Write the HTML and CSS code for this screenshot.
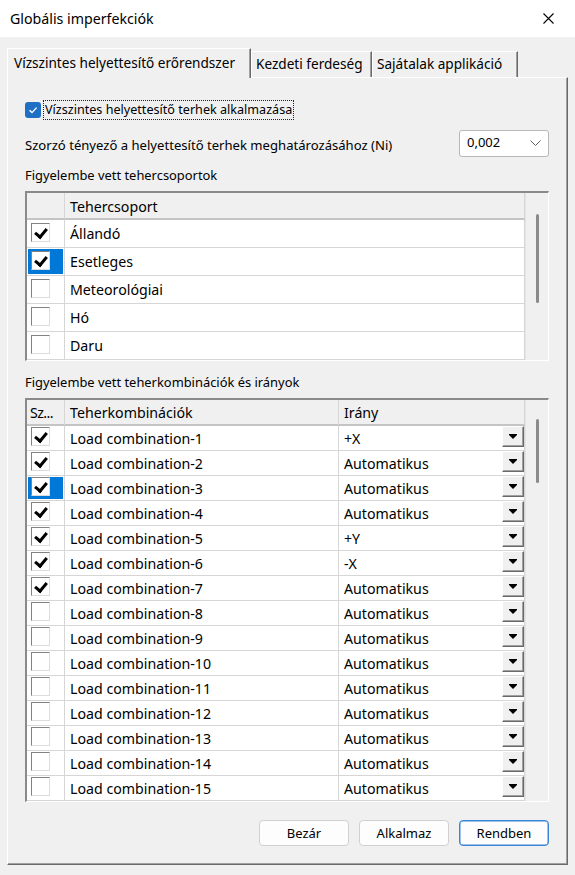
FILE: index.html
```html
<!DOCTYPE html>
<html lang="hu">
<head>
<meta charset="utf-8">
<title>Globális imperfekciók</title>
<link rel="stylesheet" href="styles.css">
</head>
<body>
<div class="window">
  <div class="titlebar">
    <span class="title">Globális imperfekciók</span>
    <svg class="close" width="11" height="11" viewBox="0 0 11 11"><path d="M0.5 0.5 L10.5 10.5 M10.5 0.5 L0.5 10.5" stroke="#000" stroke-width="1.1" fill="none"/></svg>
  </div>
  <div class="body">
    <div class="tabs">
      <div class="tab active">Vízszintes helyettesítő erőrendszer</div>
      <div class="tab t2">Kezdeti ferdeség</div>
      <div class="tab t3">Sajátalak applikáció</div>
    </div>
    <div class="panel">
      <div class="apply">
        <span class="wincheck"><svg width="12" height="12" viewBox="0 0 12 12"><path d="M2.5 6.2 L5 8.6 L9.6 3.6" stroke="#fff" stroke-width="1.4" fill="none"/></svg></span>
        <span class="focus">Vízszintes helyettesítő terhek alkalmazása</span>
      </div>
      <div class="factor">
        <span>Szorzó tényező a helyettesítő terhek meghatározásához (Ni)</span>
        <div class="combo"><span>0,002</span><svg width="11" height="6" viewBox="0 0 11 6"><path d="M0.5 0.5 L5.5 5.5 L10.5 0.5" stroke="#606060" stroke-width="1" fill="none"/></svg></div>
      </div>
      <div class="label l1">Figyelembe vett tehercsoportok</div>
      <div class="table t-groups">
        <div class="grid">
          <div class="row hdr"><div class="c"></div><div class="c txt">Tehercsoport</div></div>
          <div class="row r"><div class="c cb"><span class="box on"></span></div><div class="c txt">Állandó</div></div>
          <div class="row r"><div class="c cb sel"><span class="box on"></span></div><div class="c txt">Esetleges</div></div>
          <div class="row r"><div class="c cb"><span class="box"></span></div><div class="c txt">Meteorológiai</div></div>
          <div class="row r"><div class="c cb"><span class="box"></span></div><div class="c txt">Hó</div></div>
          <div class="row r"><div class="c cb"><span class="box"></span></div><div class="c txt">Daru</div></div>
        </div>
        <div class="vscroll"><span class="thumb th1"></span></div>
      </div>
      <div class="label l2">Figyelembe vett teherkombinációk és irányok</div>
      <div class="table t-combos">
        <div class="grid">
          <div class="row hdr"><div class="c txt sz">Sz...</div><div class="c txt">Teherkombinációk</div><div class="c txt">Irány</div></div>
          <div class="row r"><div class="c cb"><span class="box on"></span></div><div class="c txt">Load combination-1</div><div class="c txt dir">+X<span class="dd"></span></div></div>
          <div class="row r"><div class="c cb"><span class="box on"></span></div><div class="c txt">Load combination-2</div><div class="c txt dir">Automatikus<span class="dd"></span></div></div>
          <div class="row r"><div class="c cb sel"><span class="box on"></span></div><div class="c txt">Load combination-3</div><div class="c txt dir">Automatikus<span class="dd"></span></div></div>
          <div class="row r"><div class="c cb"><span class="box on"></span></div><div class="c txt">Load combination-4</div><div class="c txt dir">Automatikus<span class="dd"></span></div></div>
          <div class="row r"><div class="c cb"><span class="box on"></span></div><div class="c txt">Load combination-5</div><div class="c txt dir">+Y<span class="dd"></span></div></div>
          <div class="row r"><div class="c cb"><span class="box on"></span></div><div class="c txt">Load combination-6</div><div class="c txt dir">-X<span class="dd"></span></div></div>
          <div class="row r"><div class="c cb"><span class="box on"></span></div><div class="c txt">Load combination-7</div><div class="c txt dir">Automatikus<span class="dd"></span></div></div>
          <div class="row r"><div class="c cb"><span class="box"></span></div><div class="c txt">Load combination-8</div><div class="c txt dir">Automatikus<span class="dd"></span></div></div>
          <div class="row r"><div class="c cb"><span class="box"></span></div><div class="c txt">Load combination-9</div><div class="c txt dir">Automatikus<span class="dd"></span></div></div>
          <div class="row r"><div class="c cb"><span class="box"></span></div><div class="c txt">Load combination-10</div><div class="c txt dir">Automatikus<span class="dd"></span></div></div>
          <div class="row r"><div class="c cb"><span class="box"></span></div><div class="c txt">Load combination-11</div><div class="c txt dir">Automatikus<span class="dd"></span></div></div>
          <div class="row r"><div class="c cb"><span class="box"></span></div><div class="c txt">Load combination-12</div><div class="c txt dir">Automatikus<span class="dd"></span></div></div>
          <div class="row r"><div class="c cb"><span class="box"></span></div><div class="c txt">Load combination-13</div><div class="c txt dir">Automatikus<span class="dd"></span></div></div>
          <div class="row r"><div class="c cb"><span class="box"></span></div><div class="c txt">Load combination-14</div><div class="c txt dir">Automatikus<span class="dd"></span></div></div>
          <div class="row r"><div class="c cb"><span class="box"></span></div><div class="c txt">Load combination-15</div><div class="c txt dir">Automatikus<span class="dd"></span></div></div>
        </div>
        <div class="vscroll"><span class="thumb th2"></span></div>
      </div>
      <div class="buttons">
        <button class="btn">Bezár</button>
        <button class="btn">Alkalmaz</button>
        <button class="btn def">Rendben</button>
      </div>
    </div>
  </div>
</div>
</body>
</html>
```
FILE: styles.css
```css
* { box-sizing: border-box; margin: 0; padding: 0; }
html, body { width: 575px; height: 875px; overflow: hidden; }
body {
  font-family: "Noto Sans", "Open Sans", sans-serif;
  font-size: 13px;
  color: #000;
  background: #f0f0f0;
}
.window { width: 575px; height: 875px; display: flex; flex-direction: column; background: #f0f0f0; }

.titlebar {
  height: 37px; flex: none; background: #fff;
  display: flex; align-items: center; justify-content: space-between;
  padding: 0 21px 0 10px;
}
.title { font-size: 14.2px; }
.close { display: block; }

.body { padding: 11px 0 0 7px; }

.tabs { display: flex; align-items: flex-end; height: 29px; position: relative; z-index: 1; font-size: 13.6px; }
.tab {
  height: 26px; background: #f0f0f0;
  border-top: 1px solid #fff; border-left: 1px solid #fff;
  border-right: 1px solid #696969;
  box-shadow: inset -1px 0 0 #a0a0a0;
  display: flex; align-items: center; padding: 0 0 2px 4px;
  white-space: nowrap;
}
.tab.active { width: 244px; height: 30px; margin-bottom: -1px; padding: 0 0 3px 6px; }
.tab.t2 { width: 121px; }
.tab.t3 { width: 146px; }

.panel {
  width: 561px; height: 788px;
  border-top: 1px solid #fff; border-left: 1px solid #fff;
  border-right: 1px solid #696969; border-bottom: 1px solid #696969;
  box-shadow: inset -1px -1px 0 #a0a0a0;
  padding: 0 18px 0 17px;
  display: flex; flex-direction: column;
}

.apply { margin-top: 21px; height: 21px; display: flex; align-items: center; }
.wincheck {
  width: 16px; height: 16px; border-radius: 3px; background: #1f6fc5;
  display: flex; align-items: center; justify-content: center; flex: none;
}
.focus { margin-left: 2px; border: 1px dotted #222; padding: 0 1px; line-height: 18px; font-size: 12.6px; }

.factor { margin-top: 9px; height: 28px; display: flex; align-items: center; justify-content: space-between; font-size: 13.1px; }
.factor > span { margin-top: 4px; }
.combo {
  width: 90px; height: 27px; background: #fff; border: 1px solid #b8b8b8; border-radius: 3px;
  display: flex; align-items: center; justify-content: space-between; padding: 0 7px 0 7px;
  font-size: 13px;
}
.combo span { margin-top: -3px; }

.label { height: 18px; display: flex; align-items: center; font-size: 12.9px; }
.l1 { margin-top: 9px; }
.l2 { margin-top: 12px; }

.table {
  display: flex; overflow: hidden; background: #f0f0f0;
  border-top: 2px solid #8a8a8a; border-left: 2px solid #8a8a8a;
  border-right: 1px solid #fff; border-bottom: 1px solid #fff;
  font-size: 14.2px;
}
.t-groups { margin-top: 7px; height: 170px; }
.t-combos { margin-top: 7px; height: 404px; }
.grid { width: 498px; flex: none; display: flex; flex-direction: column; }
.row { display: grid; flex: none; }
.t-groups .row { grid-template-columns: 38px 460px; }
.t-combos .row { grid-template-columns: 38px 274px 186px; }
.c { border-right: 1px solid #d6d6d6; border-bottom: 1px solid #d6d6d6; display: flex; align-items: center; position: relative; overflow: hidden; }
.hdr .c { background: #f0f0f0; border-bottom-color: #c4c4c4; border-bottom-width: 2px; }
.t-groups .hdr { height: 27px; }
.t-combos .hdr { height: 26px; }
.r .c { background: #fff; }
.t-groups .r { height: 28px; }
.t-combos .r { height: 25px; }
.txt { padding-left: 5px; white-space: nowrap; }
.hdr .txt { padding-top: 1px; }
.sz { padding-left: 3px; letter-spacing: -0.6px; }

.cb { padding-left: 4px; }
.t-groups .cb { align-items: flex-start; padding-top: 3px; }
.t-combos .cb { align-items: flex-start; padding-top: 1px; }
.r .c.sel { background: #0078d7; box-shadow: inset 0 0 0 1px #fff; }
.box {
  width: 19px; height: 19px; background: #fff;
  border-top: 1px solid #828282; border-left: 1px solid #828282;
  border-right: 1px solid #dcdcdc; border-bottom: 1px solid #dcdcdc;
  position: relative;
}
.box.on::after {
  content: ""; position: absolute; left: 5px; top: 2px;
  width: 5px; height: 9px;
  border-right: 3px solid #000; border-bottom: 3px solid #000;
  transform: rotate(40deg);
}

.dir { justify-content: flex-start; overflow: visible; }
.dd {
  position: absolute; right: 0; top: 0; width: 22px; height: 21px;
  background: #f0f0f0;
  border-top: 1px solid #fff; border-left: 1px solid #fff;
  border-right: 1px solid #696969; border-bottom: 1px solid #696969;
  box-shadow: inset -1px -1px 0 #a0a0a0;
}
.dd::after {
  content: ""; position: absolute; left: 6px; top: 8px;
  border-left: 4px solid transparent; border-right: 4px solid transparent;
  border-top: 4px solid #000;
}
.dd::before {
  content: ""; position: absolute; left: 6px; top: 7px; width: 8px; height: 1px; background: #000;
}

.vscroll { flex: 1; border-left: 1px solid #e4e4e4; position: relative; background: #f0f0f0; }
.thumb { position: absolute; left: 10px; width: 3px; background: #8a8a8a; border-radius: 2px; }
.th1 { top: 21px; height: 89px; }
.th2 { top: 19px; height: 64px; }

.buttons { margin-top: 18px; display: flex; justify-content: flex-end; gap: 10px; padding-right: 0; }
.btn {
  width: 90px; height: 26px; background: #fdfdfd;
  border: 1px solid #d0d0d0; border-radius: 4px;
  font-family: "Noto Sans", "Open Sans", sans-serif; font-size: 13px; color: #000;
}
.btn.def { border: 1px solid #3a86d8; box-shadow: inset 0 0 0 0.5px #3a86d8; }
```
